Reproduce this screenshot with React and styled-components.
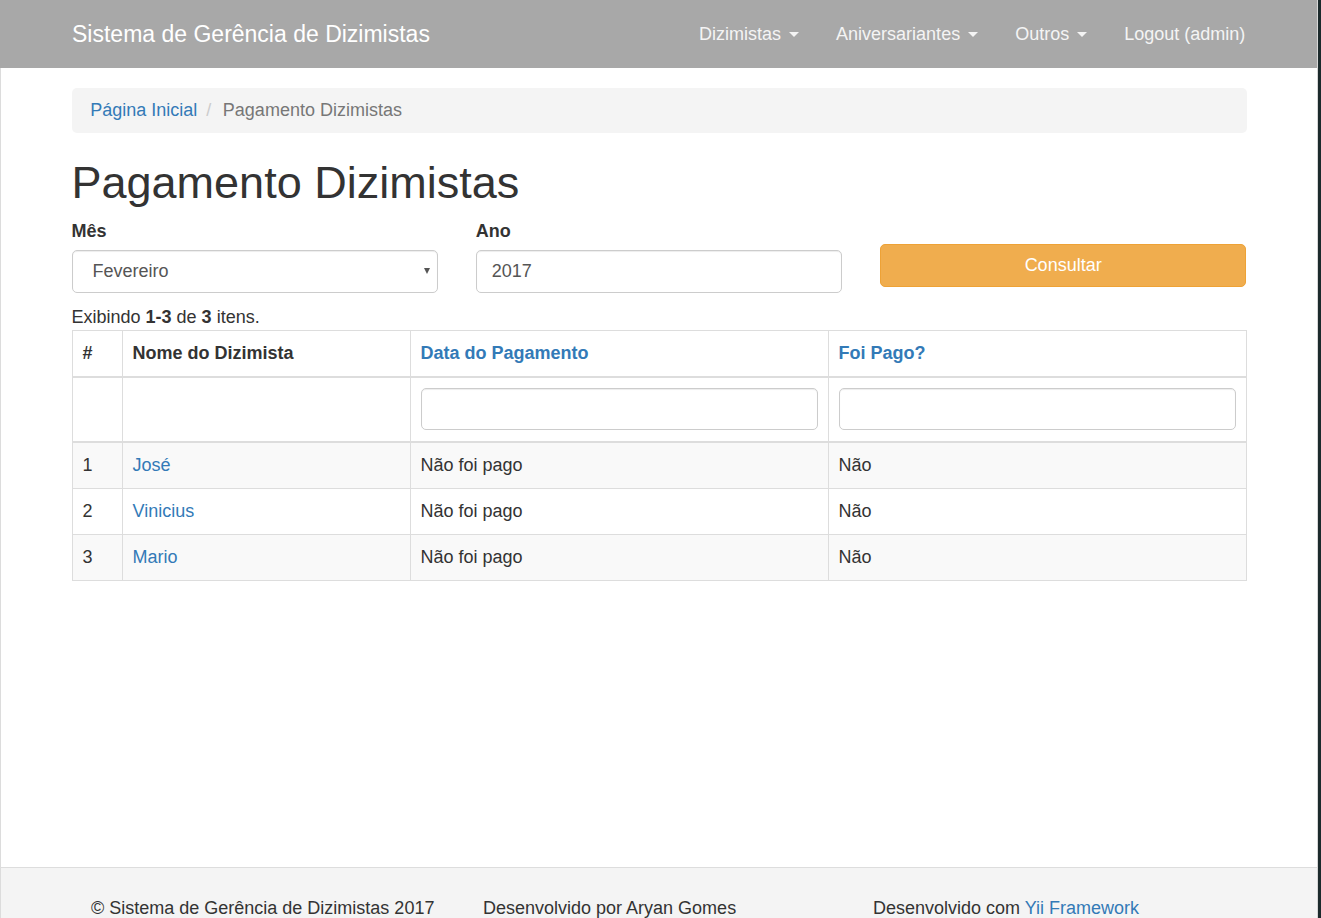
import React from 'react';
import styled, { createGlobalStyle } from 'styled-components';

const GlobalStyle = createGlobalStyle`
  html, body {
    margin: 0;
    padding: 0;
    background: #1c2a2c;
  }
  body {
    font-family: 'Liberation Sans', Arial, Helvetica, sans-serif;
    font-size: 18px;
    line-height: 25px;
    color: #333;
  }
  * { box-sizing: border-box; }
`;

const rows = [
  { id: 1, name: 'José', date: 'Não foi pago', paid: 'Não' },
  { id: 2, name: 'Vinicius', date: 'Não foi pago', paid: 'Não' },
  { id: 3, name: 'Mario', date: 'Não foi pago', paid: 'Não' },
];

const App = () => {
  return (
    <>
      <GlobalStyle />
      <Page>
        <Navbar>
          <NavContainer>
            <Brand href="#">Sistema de Gerência de Dizimistas</Brand>
            <NavList>
              <NavItem href="#">Dizimistas <Caret /></NavItem>
              <NavItem href="#">Aniversariantes <Caret /></NavItem>
              <NavItem href="#">Outros <Caret /></NavItem>
              <NavItem href="#">Logout (admin)</NavItem>
            </NavList>
          </NavContainer>
        </Navbar>

        <Body>
          <Main>
            <Container>
              <Breadcrumb>
                <Crumb><Link href="#">Página Inicial</Link></Crumb>
                <Crumb active>Pagamento Dizimistas</Crumb>
              </Breadcrumb>

              <Title>Pagamento Dizimistas</Title>

              <FormRow>
                <FormGroup>
                  <Label>Mês</Label>
                  <SelectWrap>
                    <Select defaultValue="2">
                      <option value="1">Janeiro</option>
                      <option value="2">Fevereiro</option>
                      <option value="3">Março</option>
                    </Select>
                  </SelectWrap>
                </FormGroup>
                <FormGroup>
                  <Label>Ano</Label>
                  <Input defaultValue="2017" />
                </FormGroup>
                <FormGroup>
                  <Button type="button">Consultar</Button>
                </FormGroup>
              </FormRow>

              <Summary>
                Exibindo <b>1-3</b> de <b>3</b> itens.
              </Summary>

              <Table>
                <colgroup>
                  <col style={{ width: 50 }} />
                  <col style={{ width: 288 }} />
                  <col style={{ width: 418 }} />
                  <col />
                </colgroup>
                <thead>
                  <tr>
                    <Th>#</Th>
                    <Th>Nome do Dizimista</Th>
                    <Th><Link href="#">Data do Pagamento</Link></Th>
                    <Th><Link href="#">Foi Pago?</Link></Th>
                  </tr>
                  <tr>
                    <FilterCell>&nbsp;</FilterCell>
                    <FilterCell>&nbsp;</FilterCell>
                    <FilterCell><Input /></FilterCell>
                    <FilterCell><Input /></FilterCell>
                  </tr>
                </thead>
                <tbody>
                  {rows.map((r, i) => (
                    <Tr key={r.id} $striped={i % 2 === 0}>
                      <Td>{r.id}</Td>
                      <Td><Link href="#">{r.name}</Link></Td>
                      <Td>{r.date}</Td>
                      <Td>{r.paid}</Td>
                    </Tr>
                  ))}
                </tbody>
              </Table>
            </Container>
          </Main>

          <Footer>
            <FooterGrid>
              <span>© Sistema de Gerência de Dizimistas 2017</span>
              <span>Desenvolvido por Aryan Gomes</span>
              <span>Desenvolvido com <Link href="#">Yii Framework</Link></span>
            </FooterGrid>
          </Footer>
        </Body>
      </Page>
    </>
  );
};

export default App;

const Page = styled.div`
  width: 1318px;
  min-height: 918px;
  background: #fff;
  border-right: 1px solid #d6d6d6;
`;

const Navbar = styled.nav`
  height: 68px;
  background: #a8a8a8;
`;

const Container = styled.div`
  width: 1175px;
  margin: 0 auto;
`;

const NavContainer = styled(Container)`
  height: 100%;
  display: flex;
  align-items: center;
  justify-content: space-between;
`;

const Brand = styled.a`
  color: #fff;
  font-size: 23px;
  line-height: 25px;
  text-decoration: none;
  padding-left: 1px;
`;

const NavList = styled.div`
  display: flex;
  align-items: center;
  margin-right: -18px;
`;

const NavItem = styled.a`
  color: #f4f4f4;
  text-decoration: none;
  padding: 0 18.75px;
  display: flex;
  align-items: center;
  white-space: pre;
`;

const Caret = styled.span`
  display: inline-block;
  width: 0;
  height: 0;
  margin-left: 2.5px;
  border-top: 5px solid #f4f4f4;
  border-left: 5px solid transparent;
  border-right: 5px solid transparent;
`;

const Body = styled.div`
  border-left: 1px solid #dcdcdc;
`;

const Main = styled.main`
  min-height: 799px;
  padding-top: 20px;
`;

const Breadcrumb = styled.ol`
  list-style: none;
  margin: 0 0 25px;
  padding: 10px 18.75px;
  background: #f4f4f4;
  border-radius: 5px;
  display: flex;
`;

const Crumb = styled.li`
  color: ${p => (p.active ? '#777' : 'inherit')};
  &:not(:first-child)::before {
    content: '/\\00a0';
    padding: 0 6.5px 0 9px;
    color: #ccc;
  }
`;

const Link = styled.a`
  color: #337ab7;
  text-decoration: none;
`;

const Title = styled.h1`
  font-size: 45px;
  line-height: 49.5px;
  font-weight: 500;
  margin: 25px 0 11.5px;
  color: #333;
`;

const FormRow = styled.div`
  display: grid;
  grid-template-columns: repeat(3, 1fr);
  column-gap: 37.5px;
`;

const FormGroup = styled.div`
  display: flex;
  flex-direction: column;
`;

const Label = styled.label`
  font-weight: bold;
  margin-bottom: 6.25px;
`;

const inputBase = `
  width: 100%;
  height: 42.5px;
  border: 1px solid #ccc;
  border-radius: 5px;
  background: #fff;
  box-shadow: inset 0 1px 1px rgba(0, 0, 0, 0.075);
  font-family: 'Liberation Sans', Arial, Helvetica, sans-serif;
  font-size: 18px;
  color: #555;
  outline: none;
`;

const Input = styled.input`
  ${inputBase}
  padding: 7.5px 15px;
`;

const SelectWrap = styled.div`
  position: relative;
  &::after {
    content: '';
    position: absolute;
    right: 8px;
    top: 18px;
    border-top: 6px solid #555;
    border-left: 3.5px solid transparent;
    border-right: 3.5px solid transparent;
    pointer-events: none;
  }
`;

const Select = styled.select`
  ${inputBase}
  appearance: none;
  -webkit-appearance: none;
  padding: 6.5px 15px 8.5px 20px;
`;

const Button = styled.button`
  margin-top: 25px;
  height: 42.5px;
  width: 100%;
  background: #f0ad4e;
  border: 1px solid #eea236;
  border-radius: 5px;
  color: #fff;
  font-family: 'Liberation Sans', Arial, Helvetica, sans-serif;
  font-size: 18px;
  cursor: pointer;
`;

const Summary = styled.div`
  margin-top: 12px;
  height: 25px;
`;

const Table = styled.table`
  width: 100%;
  table-layout: fixed;
  border-collapse: collapse;
  border: 1px solid #ddd;
  margin-bottom: 25px;
`;

const Th = styled.th`
  text-align: left;
  padding: 10px;
  line-height: 25px;
  font-weight: bold;
  border: 1px solid #ddd;
  border-bottom: 2px solid #ddd;
  vertical-align: bottom;
`;

const FilterCell = styled(Th)`
  font-weight: normal;
  padding-bottom: 10.5px;
`;

const Tr = styled.tr`
  background: ${p => (p.$striped ? '#f9f9f9' : '#fff')};
`;

const Td = styled.td`
  padding: 10px;
  line-height: 25px;
  border: 1px solid #ddd;
`;

const Footer = styled.footer`
  height: 75px;
  background: #f4f4f4;
  border-top: 1px solid #ddd;
  padding-top: 28px;
`;

const FooterGrid = styled.div`
  display: grid;
  grid-template-columns: 392px 390px 1fr;
  padding-left: 90px;
`;
